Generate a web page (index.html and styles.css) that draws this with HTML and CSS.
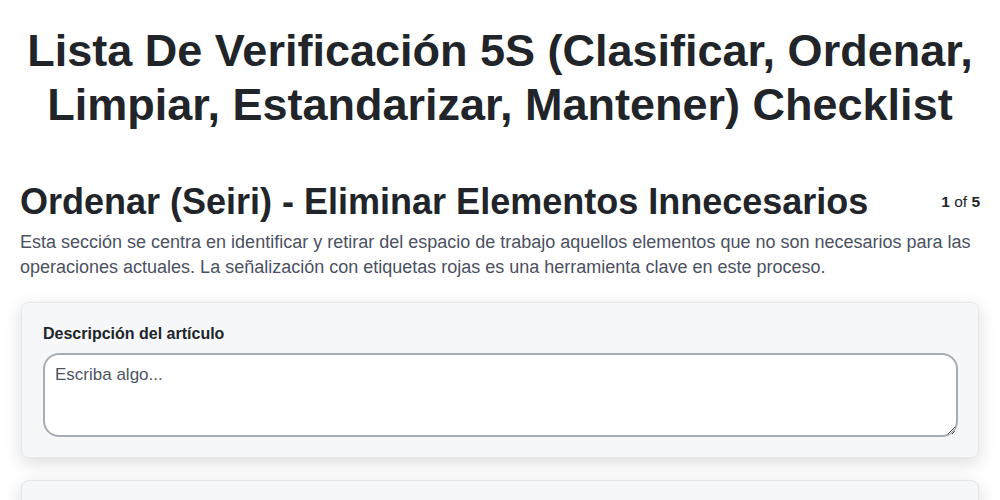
FILE: index.html
```html
<!DOCTYPE html>
<html lang="es">
<head>
<meta charset="utf-8">
<link rel="stylesheet" href="styles.css">
</head>
<body>
<main class="page">
  <h1 class="title">Lista De Verificación 5S (Clasificar, Ordenar, Limpiar, Estandarizar, Mantener) Checklist</h1>
  <section class="section">
    <div class="section-head">
      <h2 class="section-title">Ordenar (Seiri) - Eliminar Elementos Innecesarios</h2>
      <div class="pager"><b>1</b> of <b>5</b></div>
    </div>
    <p class="section-desc">Esta sección se centra en identificar y retirar del espacio de trabajo aquellos elementos que no son necesarios para las operaciones actuales. La señalización con etiquetas rojas es una herramienta clave en este proceso.</p>
    <div class="card">
      <label class="field-label" for="desc">Descripción del artículo</label>
      <textarea id="desc" class="field-input" placeholder="Escriba algo..."></textarea>
    </div>
    <div class="card card-next"></div>
  </section>
</main>
</body>
</html>
```
FILE: styles.css
```css
* { box-sizing: border-box; }
html, body { margin: 0; padding: 0; background: #fff; }
body {
  font-family: "Liberation Sans", Arial, sans-serif;
  color: #212529;
}
.page {
  padding: 24px 20px 20px;
}
.title {
  margin: 0 0 48px;
  text-align: center;
  font-size: 45px;
  line-height: 54px;
  font-weight: 700;
  color: #212529;
}
.section-head {
  display: flex;
  align-items: center;
  justify-content: space-between;
  gap: 20px;
}
.section-title {
  margin: 0;
  font-size: 36px;
  line-height: 43px;
  font-weight: 700;
}
.pager {
  font-size: 15.5px;
  color: #212529;
  white-space: nowrap;
}
.section-desc {
  margin: 7px 0 22px;
  font-size: 18px;
  line-height: 25px;
  color: #4b5161;
}
.card {
  background: #f6f7f9;
  border: 1px solid #e6e8ec;
  border-radius: 8px;
  box-shadow: 0 5px 18px rgba(0,0,0,0.14);
  padding: 19px 20px 20px 21px;
  margin: 0 1px 22px;
  display: flex;
  flex-direction: column;
}
.card-next { min-height: 100px; }
.field-label {
  font-size: 16px;
  line-height: 24px;
  font-weight: 700;
  color: #212529;
  margin-bottom: 7px;
}
.field-input {
  width: 100%;
  height: 84px;
  border: 2px solid #a6adb5;
  border-radius: 16px;
  padding: 10px;
  font-family: "Liberation Sans", Arial, sans-serif;
  font-size: 17px;
  color: #212529;
  background: #fff;
  resize: vertical;
  outline: none;
}
.field-input::placeholder { color: #4b5563; opacity: 1; }
```
